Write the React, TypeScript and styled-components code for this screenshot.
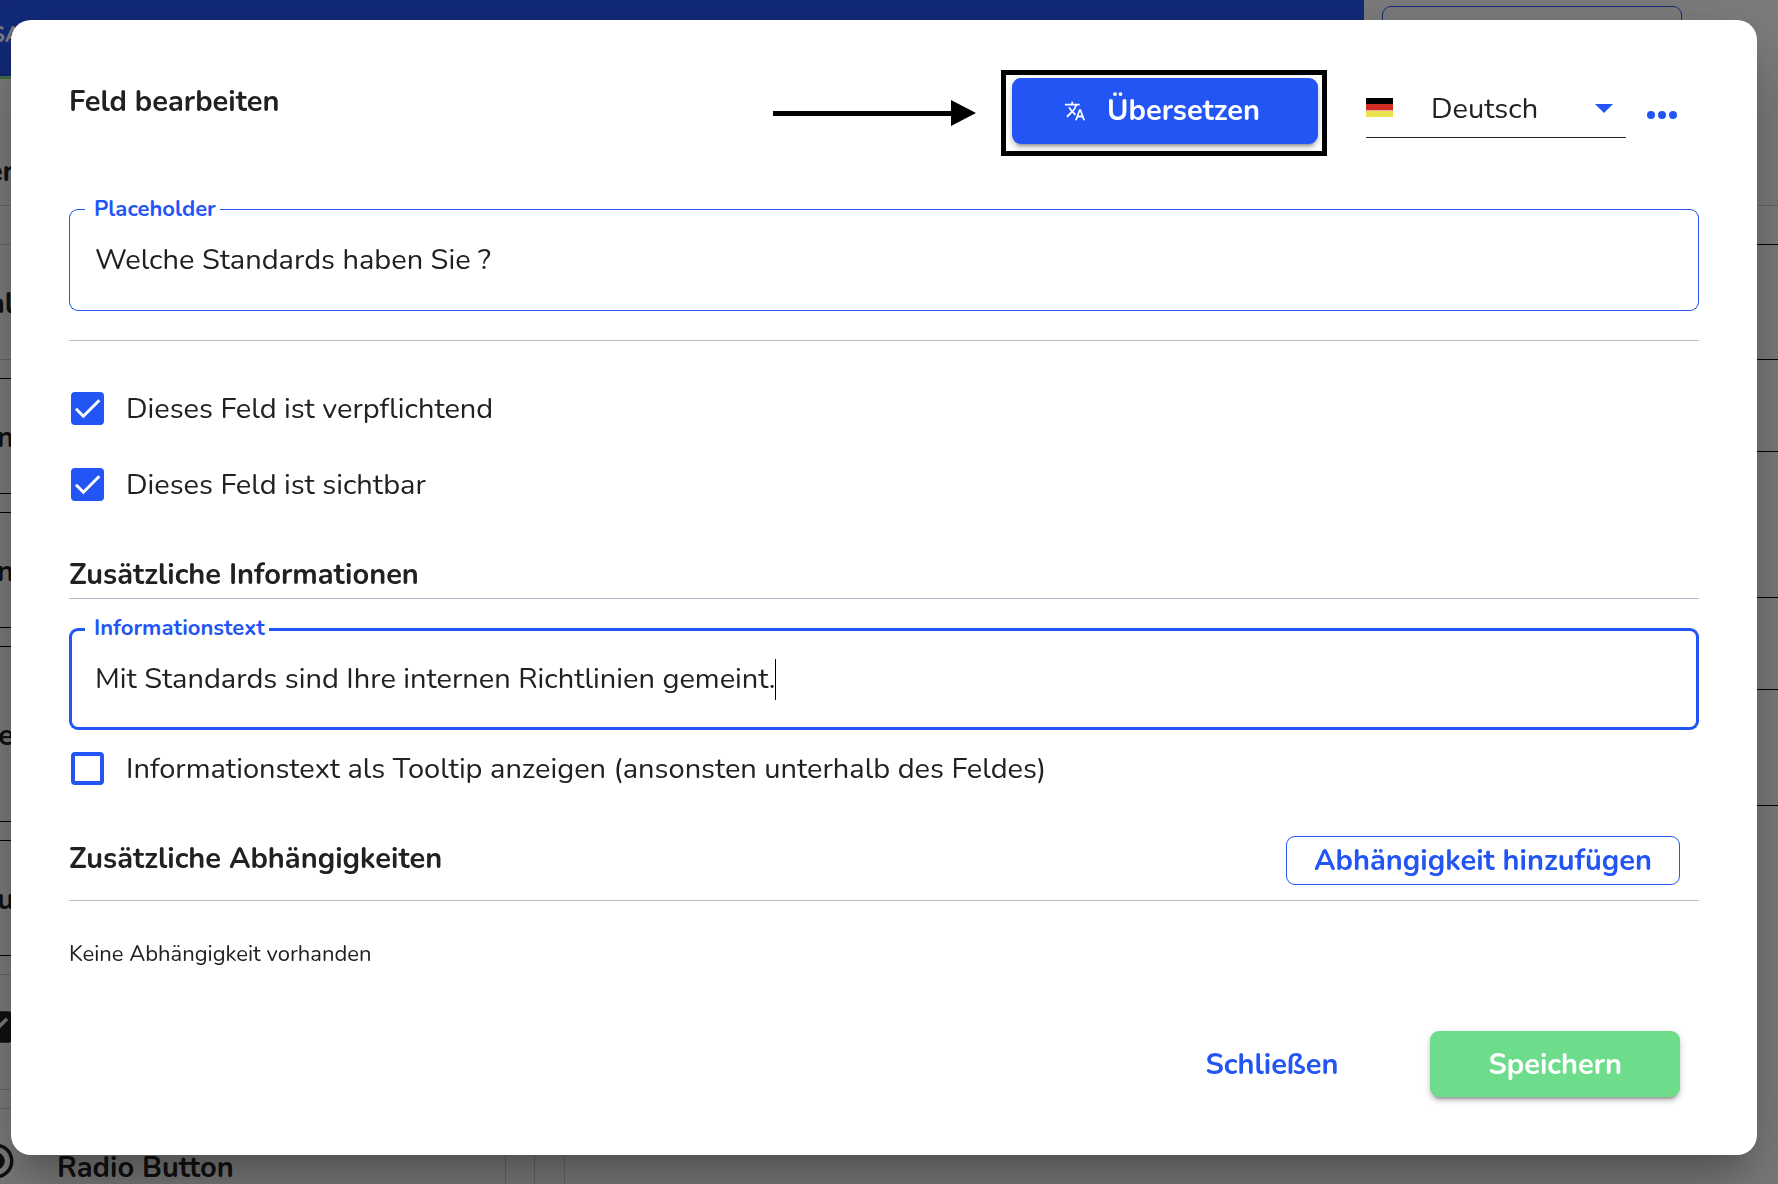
import React, { useId, useState } from "react";
import styled, { createGlobalStyle, css } from "styled-components";
import { MdCheckBox, MdRadioButtonChecked, MdTranslate } from "react-icons/md";

const color = {
  primary: "#2355f5",
  success: "#6ddc8b",
  text: "#212121",
  rule: "#b3bac8",
  page: "#fafafa",
  softLine: "#cfcfcf",
  accentLine: "#8edc8c",
};

const GlobalStyle = createGlobalStyle`
  *, *::before, *::after { box-sizing: border-box; }
  body {
    margin: 0;
    color: ${color.text};
    background: ${color.page};
    font-family: Nunito, "Open Sans", "Noto Sans", sans-serif;
    font-size: 29px;
    line-height: 42px;
  }
  button, input, select { font: inherit; color: inherit; margin: 0; }
`;

/* ---------- form builder behind the dialog ---------- */

const Page = styled.div`
  display: flex;
  flex-direction: column;
  height: 100vh;
  overflow: hidden;
`;

const TopBar = styled.header`
  display: grid;
  grid-template-columns: minmax(0, 1fr) 414px;
  flex: none;
`;

const Brand = styled.div`
  height: 79px;
  padding-top: 20px;
  background: ${color.primary};
  border-bottom: 3px solid ${color.accentLine};
  color: #fff;
  font-size: 22px;
  font-weight: 700;
  line-height: 30px;
  text-indent: -9px;
`;

const Actions = styled.div`
  display: flex;
  align-items: flex-start;
  padding: 6px 96px 0 18px;
`;

const ActionButton = styled.button`
  flex: 1;
  height: 49px;
  padding: 10px 35px;
  background: none;
  border: 1px solid ${color.primary};
  border-radius: 9px;
  text-align: left;
  line-height: 0;
`;

const PageHeading = styled.div`
  flex: none;
  padding: 70px 0 10px;
  border-bottom: 1px solid ${color.softLine};
  font-weight: 700;
  line-height: 46px;
`;

const Workspace = styled.div`
  display: flex;
  flex: 1;
  min-height: 0;
`;

const Palette = styled.div`
  display: flex;
  flex: none;
  flex-direction: column;
  gap: 18px;
  width: 535px;
  padding: 38px 28px 0 0;
  border-right: 1px solid ${color.softLine};
`;

const PaletteCard = styled.div<{ $tall?: boolean; $soft?: boolean }>`
  display: flex;
  flex: none;
  align-items: center;
  gap: 40px;
  height: ${(p) => (p.$tall ? 176 : 116)}px;
  margin-left: -40px;
  padding: 3px 0 0 14px;
  border: 1px solid ${(p) => (p.$soft ? color.softLine : "#000")};
  font-weight: 700;

  svg {
    flex: none;
    margin-bottom: 13px;
  }
`;

const Fragment = styled.span`
  display: flex;
  justify-content: flex-end;
  width: 14px;
`;

const CardFragment = styled(Fragment)`
  margin-left: 25px;
`;

const Canvas = styled.div`
  flex: 1;
  margin-left: 29px;
  padding-top: 38px;
  border-left: 1px solid ${color.softLine};
`;

const CanvasRows = styled.div`
  border-top: 1px solid #000;
`;

const CanvasRow = styled.div<{ $height: number }>`
  height: ${(p) => p.$height}px;
  border-bottom: 1px solid #000;
`;

/* ---------- dialog shell ---------- */

const Backdrop = styled.div`
  position: fixed;
  inset: 0;
  display: flex;
  align-items: flex-start;
  padding: 20px 21px 29px 11px;
  background: rgba(0, 0, 0, 0.5);
  overflow: hidden;
`;

const Dialog = styled.section`
  flex: 1;
  min-width: 0;
  padding: 50px 58px 58px;
  background: #fff;
  border-radius: 20px;
  box-shadow:
    0 22px 30px -14px rgba(0, 0, 0, 0.2),
    0 48px 76px 6px rgba(0, 0, 0, 0.14),
    0 18px 92px 16px rgba(0, 0, 0, 0.12);
`;

const Header = styled.header`
  display: flex;
  align-items: center;
  padding-right: 19px;
`;

const Title = styled.h1`
  align-self: flex-start;
  margin: 0 auto 0 0;
  padding-top: 9px;
  font-size: 29px;
  font-weight: 700;
  line-height: 46px;
`;

const PointerArrow = styled.svg`
  flex: none;
  margin-right: 25px;
`;

const Highlight = styled.div`
  margin-right: 39px;
  padding: 3px 4px 7px 6px;
  border: 5px solid #000;
`;

const buttonBase = css`
  display: inline-flex;
  align-items: center;
  justify-content: center;
  border: 0;
  border-radius: 9px;
  font-weight: 700;
  white-space: nowrap;
  cursor: pointer;
`;

const RaisedButton = styled.button<{ $tone: "primary" | "success" }>`
  ${buttonBase}
  gap: 21px;
  height: 66px;
  padding: ${(p) => (p.$tone === "primary" ? "0 58px 0 52px" : "2px 58px 0")};
  background: ${(p) => color[p.$tone]};
  color: #fff;
  box-shadow:
    0 6px 2px -4px rgba(0, 0, 0, 0.2),
    0 4px 4px 0 rgba(0, 0, 0, 0.14),
    0 2px 10px 0 rgba(0, 0, 0, 0.12);
`;

const FlatButton = styled.button`
  ${buttonBase}
  height: 66px;
  padding: 2px 54px 0;
  background: none;
  color: ${color.primary};
`;

const OutlineButton = styled.button`
  ${buttonBase}
  height: 49px;
  padding: 0 27px;
  background: #fff;
  border: 1px solid ${color.primary};
  color: ${color.primary};
`;

const LanguagePicker = styled.div`
  display: flex;
  align-items: center;
  gap: 38px;
  width: 260px;
  padding-bottom: 9px;
  border-bottom: 1px solid ${color.text};
`;

const Flag = styled.svg`
  flex: none;
  margin-bottom: 2px;
`;

const SelectWrap = styled.div`
  display: grid;
  flex: 1;
  align-items: center;

  > * {
    grid-area: 1 / 1;
  }

  svg {
    justify-self: end;
    margin-right: 13px;
    pointer-events: none;
  }
`;

const Select = styled.select`
  width: 100%;
  height: 40px;
  padding: 0;
  background: none;
  border: 0;
  appearance: none;
  outline: none;
`;

const MoreButton = styled.button`
  display: flex;
  align-items: center;
  justify-content: center;
  width: 36px;
  height: 36px;
  margin-left: 18px;
  padding: 3px 0 0;
  background: none;
  border: 0;
  cursor: pointer;
`;

/* ---------- form parts ---------- */

const Divider = styled.hr`
  height: 1px;
  margin: 0;
  background: ${color.rule};
  border: 0;
`;

const FieldBox = styled.div<{ $active?: boolean }>`
  position: relative;
  display: flex;
  align-items: center;
  height: 102px;
  padding: 0 26px;
  border-radius: 9px;
  box-shadow: inset 0 0 0 ${(p) => (p.$active ? 3 : 1)}px ${color.primary};
`;

const FieldLabel = styled.label`
  position: absolute;
  top: -15px;
  left: 16px;
  padding: 0 4px 0 9px;
  background: #fff;
  color: ${color.primary};
  font-size: 22px;
  font-weight: 700;
  line-height: 30px;
`;

const FieldInput = styled.input<{ $fit?: boolean }>`
  ${(p) => (p.$fit ? "field-sizing: content;" : "flex: 1;")}
  min-width: 0;
  height: 40px;
  padding: 0;
  background: none;
  border: 0;
  outline: none;
`;

const Caret = styled.span`
  width: 1px;
  height: 41px;
  background: #000;
`;

const CheckRow = styled.label`
  display: flex;
  align-items: center;
  gap: 22px;
  padding-left: 2px;
  cursor: pointer;
`;

const CheckMark = styled.span`
  display: grid;
  flex: none;
  margin-bottom: 2px;

  > * {
    grid-area: 1 / 1;
  }

  svg {
    pointer-events: none;
  }
`;

const CheckInput = styled.input`
  width: 33px;
  height: 33px;
  background: #fff;
  border: 4px solid ${color.primary};
  border-radius: 4px;
  appearance: none;

  &:checked {
    background: ${color.primary};
  }
`;

const CheckGroup = styled.div`
  display: flex;
  flex-direction: column;
  gap: 34px;
`;

const SectionRow = styled.div`
  display: flex;
  align-items: flex-start;
  justify-content: space-between;
  padding-right: 19px;
`;

const SectionTitle = styled.h2`
  margin: 0;
  font-size: 29px;
  font-weight: 700;
  line-height: 46px;
`;

const EmptyNote = styled.p`
  margin: 0;
  font-size: 22px;
  line-height: 30px;
`;

const Section = styled.div<{ $top: number }>`
  padding-top: ${(p) => p.$top}px;
`;

const Footer = styled.footer`
  display: flex;
  justify-content: flex-end;
  gap: 38px;
  padding: 62px 19px 0 0;
`;

function OutlinedField({ label, initial, active }: { label: string; initial: string; active?: boolean }) {
  const id = useId();
  const [value, setValue] = useState(initial);
  return (
    <FieldBox $active={active}>
      <FieldLabel htmlFor={id}>{label}</FieldLabel>
      <FieldInput id={id} type="text" $fit={active} value={value} onChange={(e) => setValue(e.target.value)} />
      {active && <Caret />}
    </FieldBox>
  );
}

function Checkbox({ label, initial = false }: { label: string; initial?: boolean }) {
  const [checked, setChecked] = useState(initial);
  return (
    <CheckRow>
      <CheckMark>
        <CheckInput type="checkbox" checked={checked} onChange={(e) => setChecked(e.target.checked)} />
        {checked && (
          <svg width="33" height="33" viewBox="0 0 24 24" fill="none" stroke="#fff" strokeWidth="2.2" aria-hidden>
            <path d="M3.6 12.2 9 17.6 20.6 6" />
          </svg>
        )}
      </CheckMark>
      {label}
    </CheckRow>
  );
}

const canvasRows = [115, 92, 146, 92, 116];

function FormBuilder() {
  return (
    <Page aria-hidden>
      <TopBar>
        <Brand>SA</Brand>
        <Actions>
          <ActionButton type="button" tabIndex={-1}>
            <svg width="10" height="10" viewBox="0 0 10 10" fill={color.primary}>
              <path d="M0 2.5Q5-1.5 10 2.5V10H0Z" />
            </svg>
          </ActionButton>
        </Actions>
      </TopBar>
      <PageHeading>
        <Fragment>er</Fragment>
      </PageHeading>
      <Workspace>
        <Palette>
          <PaletteCard $soft>
            <CardFragment>al</CardFragment>
          </PaletteCard>
          <PaletteCard>
            <CardFragment>n</CardFragment>
          </PaletteCard>
          <PaletteCard>
            <CardFragment>n</CardFragment>
          </PaletteCard>
          <PaletteCard $tall>
            <CardFragment>e</CardFragment>
          </PaletteCard>
          <PaletteCard>
            <CardFragment>u</CardFragment>
          </PaletteCard>
          <PaletteCard $soft>
            <MdCheckBox size={42} />
          </PaletteCard>
          <PaletteCard $soft>
            <MdRadioButtonChecked size={42} />
            Radio Button
          </PaletteCard>
        </Palette>
        <Canvas>
          <CanvasRows>
            {canvasRows.map((height, i) => (
              <CanvasRow key={i} $height={height} />
            ))}
          </CanvasRows>
        </Canvas>
      </Workspace>
    </Page>
  );
}

export default function App() {
  const [language, setLanguage] = useState("de");

  return (
    <>
      <GlobalStyle />
      <FormBuilder />
      <Backdrop>
        <Dialog role="dialog" aria-modal="true" aria-labelledby="dialog-title">
          <Header>
            <Title id="dialog-title">Feld bearbeiten</Title>
            <PointerArrow width="203" height="26" viewBox="0 0 203 26" aria-hidden>
              <path d="M0 11h178V0l25 13-25 13V16H0Z" />
            </PointerArrow>
            <Highlight>
              <RaisedButton type="button" $tone="primary">
                <MdTranslate size={22} aria-hidden />
                Übersetzen
              </RaisedButton>
            </Highlight>
            <LanguagePicker>
              <Flag width="27" height="19" viewBox="0 0 27 19" aria-hidden>
                <rect width="27" height="19" fill="#f0a9a0" />
                <rect width="27" height="6" fill="#000" />
                <rect y="6" width="27" height="6" fill="#cf2e25" />
                <rect y="13" width="27" height="6" fill="#e8e34d" />
              </Flag>
              <SelectWrap>
                <Select aria-label="Sprache" value={language} onChange={(e) => setLanguage(e.target.value)}>
                  <option value="de">Deutsch</option>
                </Select>
                <svg width="18" height="9" viewBox="0 0 18 9" fill={color.primary} aria-hidden>
                  <path d="M0 0h18L9 9Z" />
                </svg>
              </SelectWrap>
            </LanguagePicker>
            <MoreButton type="button" aria-label="Mehr">
              <svg width="30" height="8" viewBox="0 0 30 8" fill={color.primary} aria-hidden>
                <circle cx="4" cy="4" r="4" />
                <circle cx="15" cy="4" r="4" />
                <circle cx="26" cy="4" r="4" />
              </svg>
            </MoreButton>
          </Header>

          <Section $top={53}>
            <OutlinedField label="Placeholder" initial="Welche Standards haben Sie ?" />
          </Section>
          <Section $top={29}>
            <Divider />
          </Section>

          <Section $top={47}>
            <CheckGroup>
              <Checkbox label="Dieses Feld ist verpflichtend" initial />
              <Checkbox label="Dieses Feld ist sichtbar" initial />
            </CheckGroup>
          </Section>

          <Section $top={46}>
            <SectionTitle>Zusätzliche Informationen</SectionTitle>
            <Divider />
          </Section>
          <Section $top={29}>
            <OutlinedField
              label="Informationstext"
              initial="Mit Standards sind Ihre internen Richtlinien gemeint."
              active
            />
          </Section>
          <Section $top={18}>
            <Checkbox label="Informationstext als Tooltip anzeigen (ansonsten unterhalb des Feldes)" />
          </Section>

          <Section $top={46}>
            <SectionRow>
              <SectionTitle>Zusätzliche Abhängigkeiten</SectionTitle>
              <OutlineButton type="button">Abhängigkeit hinzufügen</OutlineButton>
            </SectionRow>
          </Section>
          <Section $top={15}>
            <Divider />
          </Section>
          <Section $top={38}>
            <EmptyNote>Keine Abhängigkeit vorhanden</EmptyNote>
          </Section>

          <Footer>
            <FlatButton type="button">Schließen</FlatButton>
            <RaisedButton type="button" $tone="success">
              Speichern
            </RaisedButton>
          </Footer>
        </Dialog>
      </Backdrop>
    </>
  );
}
